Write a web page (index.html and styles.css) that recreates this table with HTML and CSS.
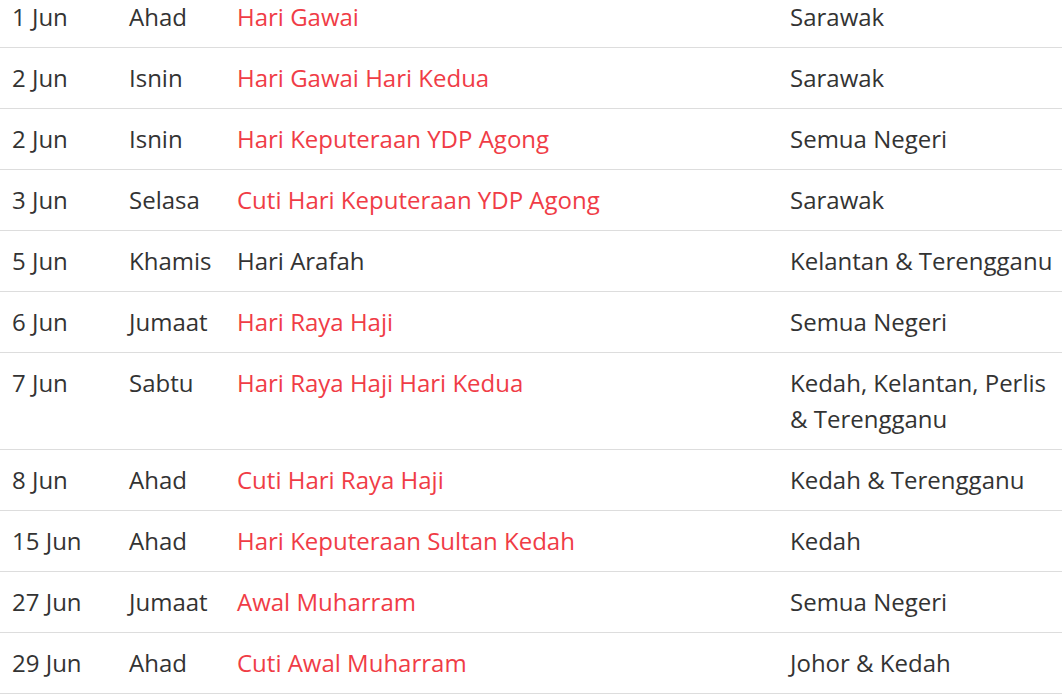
FILE: index.html
```html
<!DOCTYPE html>
<html lang="ms">
<head>
<meta charset="utf-8">
<title>Cuti Umum Jun</title>
<link rel="stylesheet" href="styles.css">
</head>
<body>
<div class="wrap">
<table class="holidays">
<colgroup><col class="c-date"><col class="c-day"><col class="c-name"><col class="c-state"></colgroup>
<tbody>
<tr><td>1 Jun</td><td>Ahad</td><td class="red">Hari Gawai</td><td>Sarawak</td></tr>
<tr><td>2 Jun</td><td>Isnin</td><td class="red">Hari Gawai Hari Kedua</td><td>Sarawak</td></tr>
<tr><td>2 Jun</td><td>Isnin</td><td class="red">Hari Keputeraan YDP Agong</td><td>Semua Negeri</td></tr>
<tr><td>3 Jun</td><td>Selasa</td><td class="red">Cuti Hari Keputeraan YDP Agong</td><td>Sarawak</td></tr>
<tr><td>5 Jun</td><td>Khamis</td><td>Hari Arafah</td><td>Kelantan &amp; Terengganu</td></tr>
<tr><td>6 Jun</td><td>Jumaat</td><td class="red">Hari Raya Haji</td><td>Semua Negeri</td></tr>
<tr><td>7 Jun</td><td>Sabtu</td><td class="red">Hari Raya Haji Hari Kedua</td><td>Kedah, Kelantan, Perlis &amp; Terengganu</td></tr>
<tr><td>8 Jun</td><td>Ahad</td><td class="red">Cuti Hari Raya Haji</td><td>Kedah &amp; Terengganu</td></tr>
<tr><td>15 Jun</td><td>Ahad</td><td class="red">Hari Keputeraan Sultan Kedah</td><td>Kedah</td></tr>
<tr><td>27 Jun</td><td>Jumaat</td><td class="red">Awal Muharram</td><td>Semua Negeri</td></tr>
<tr><td>29 Jun</td><td>Ahad</td><td class="red">Cuti Awal Muharram</td><td>Johor &amp; Kedah</td></tr>
</tbody>
</table>
</div>
</body>
</html>
```
FILE: styles.css
```css
html, body { margin: 0; padding: 0; background: #fff; }
body { font-family: "Open Sans", "Noto Sans", sans-serif; color: #333; }
.wrap { margin-top: -13px; }
.holidays { width: 1062px; border-collapse: collapse; table-layout: fixed; font-size: 24px; line-height: 36px; }
.c-date { width: 117px; }
.c-day { width: 108px; }
.c-name { width: 553px; }
.c-state { width: 284px; }
.holidays td { padding: 12px 6px 12px 12px; border-bottom: 1px solid #ddd; vertical-align: top; text-align: left; }
.holidays td.red { color: #f03c46; }
```
